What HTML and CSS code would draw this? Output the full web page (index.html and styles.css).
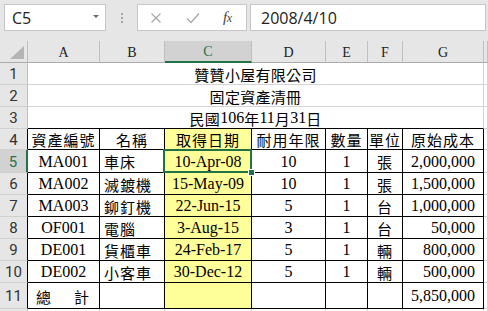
FILE: index.html
```
<!DOCTYPE html>
<html lang="zh-Hant">
<head>
<meta charset="utf-8">
<title>固定資產清冊</title>
<link rel="stylesheet" href="styles.css">
</head>
<body>
<div class="top">
  <div class="namebox"><span class="ref">C5</span><span class="dd"></span></div>
  <div class="dots"><i></i><i></i><i></i></div>
  <div class="fxbox">
    <svg class="ico" width="12" height="12" viewBox="0 0 12 12"><path d="M1.5 1.5L10.5 10.5M10.5 1.5L1.5 10.5" stroke="#a9a9a9" stroke-width="1.3" fill="none"/></svg>
    <svg class="ico" width="14" height="12" viewBox="0 0 14 12"><path d="M1 6.5L5 10.5L13 1.5" stroke="#a9a9a9" stroke-width="1.4" fill="none"/></svg>
    <span class="fx">f<span class="fxx">x</span></span>
  </div>
  <div class="input">2008/4/10</div>
</div>
<div class="sheet">
  <div class="corner"><i></i></div>
  <div class="ch">A</div><div class="ch">B</div><div class="ch sel">C</div><div class="ch">D</div><div class="ch">E</div><div class="ch">F</div><div class="ch">G</div><div class="ch"></div>

  <div class="rh">1</div><div class="c title zh">贊贊小屋有限公司</div><div class="c"></div>
  <div class="rh">2</div><div class="c title zh">固定資產清冊</div><div class="c"></div>
  <div class="rh">3</div><div class="c title bb zh">民國<span class="lat">106</span>年<span class="lat">11</span>月<span class="lat">31</span>日</div><div class="c"></div>

  <div class="rh blk">4</div>
  <div class="c t zh">資產編號</div><div class="c t zh">名稱</div><div class="c t y zh">取得日期</div><div class="c t zh">耐用年限</div><div class="c t zh">數量</div><div class="c t zh">單位</div><div class="c t zh">原始成本</div><div class="c"></div>

  <div class="rh act">5</div>
  <div class="c t">MA001</div><div class="c t zh l">車床</div><div class="c t y active">10-Apr-08<span class="sel-box"></span><span class="handle"></span></div><div class="c t">10</div><div class="c t">1</div><div class="c t zh">張</div><div class="c t r">2,000,000</div><div class="c"></div>

  <div class="rh blk">6</div>
  <div class="c t">MA002</div><div class="c t zh l">滅鍍機</div><div class="c t y">15-May-09</div><div class="c t">10</div><div class="c t">1</div><div class="c t zh">張</div><div class="c t r">1,500,000</div><div class="c"></div>

  <div class="rh blk">7</div>
  <div class="c t">MA003</div><div class="c t zh l">鉚釘機</div><div class="c t y">22-Jun-15</div><div class="c t">5</div><div class="c t">1</div><div class="c t zh">台</div><div class="c t r">1,000,000</div><div class="c"></div>

  <div class="rh blk">8</div>
  <div class="c t">OF001</div><div class="c t zh l">電腦</div><div class="c t y">3-Aug-15</div><div class="c t">3</div><div class="c t">1</div><div class="c t zh">台</div><div class="c t r">50,000</div><div class="c"></div>

  <div class="rh blk">9</div>
  <div class="c t">DE001</div><div class="c t zh l">貨櫃車</div><div class="c t y">24-Feb-17</div><div class="c t">5</div><div class="c t">1</div><div class="c t zh">輛</div><div class="c t r">800,000</div><div class="c"></div>

  <div class="rh blk">10</div>
  <div class="c t">DE002</div><div class="c t zh l">小客車</div><div class="c t y">30-Dec-12</div><div class="c t">5</div><div class="c t">1</div><div class="c t zh">輛</div><div class="c t r">500,000</div><div class="c"></div>

  <div class="rh blk">11</div>
  <div class="c t zh total">總　計</div><div class="c t"></div><div class="c t y"></div><div class="c t"></div><div class="c t"></div><div class="c t"></div><div class="c t r">5,850,000</div><div class="c"></div>

  <div class="rh"></div>
  <div class="c"></div><div class="c"></div><div class="c"></div><div class="c"></div><div class="c"></div><div class="c"></div><div class="c"></div><div class="c"></div>
</div>
</body>
</html>
```
FILE: styles.css
```
* { box-sizing: border-box; }
html, body { margin: 0; padding: 0; }
body {
  width: 488px;
  height: 311px;
  overflow: hidden;
  background: #fff;
  font-family: "Liberation Serif", "Noto Sans CJK TC", serif;
}

.top {
  height: 41px;
  background: #e6e6e6;
  display: flex;
  align-items: flex-start;
  padding: 4px 2px 0 4px;
}
.namebox {
  width: 102px;
  height: 27px;
  background: #fff;
  border: 1px solid #c6c6c6;
  display: flex;
  align-items: center;
  justify-content: space-between;
  padding: 0 6px 0 7px;
}
.ref {
  font: 16px "Open Sans", sans-serif;
  color: #222;
}
.dd {
  width: 0; height: 0;
  border-left: 3.5px solid transparent;
  border-right: 3.5px solid transparent;
  border-top: 3.5px solid #666;
  margin-top: -2px;
}
.dots {
  width: 31px;
  height: 27px;
  display: flex;
  flex-direction: column;
  align-items: center;
  justify-content: center;
  gap: 2px;
}
.dots i {
  display: block;
  width: 2px;
  height: 2px;
  background: #a6a6a6;
}
.fxbox {
  width: 110px;
  height: 27px;
  background: #fff;
  border: 1px solid #c6c6c6;
  display: flex;
  align-items: center;
  padding-left: 12px;
  gap: 0;
}
.fxbox .ico:first-child { margin-right: 24px; }
.fxbox .ico:nth-child(2) { margin-right: 23px; }
.fx {
  font: italic 15px "Liberation Serif", serif;
  color: #444;
  letter-spacing: -0.5px;
}
.fxx { font-size: 12px; }
.input {
  flex: 1;
  margin-left: 3px;
  height: 27px;
  background: #fff;
  border: 1px solid #c6c6c6;
  font: 16px "Open Sans", sans-serif;
  color: #222;
  display: flex;
  align-items: center;
  padding-left: 10px;
}

.sheet {
  display: grid;
  grid-template-columns: 28px 72px 65px 87px 74px 42px 35px 81px 1fr;
  grid-template-rows: 22px 22px 22px 22px 21px 23px 22px 22px 22px 22px 22px 26px 22px;
}

.corner {
  background: #e6e6e6;
  border-right: 1px solid #bfbfbf;
  border-bottom: 1px solid #ababab;
  display: flex;
  align-items: flex-end;
  justify-content: flex-end;
  padding: 0 3px 3px 0;
}
.corner i {
  display: block;
  width: 14px;
  height: 13px;
  background: #b4b4b4;
  clip-path: polygon(100% 0, 100% 100%, 0 100%);
}
.ch {
  background: #e6e6e6;
  border-right: 1px solid #bfbfbf;
  border-bottom: 1px solid #ababab;
  display: flex;
  align-items: center;
  justify-content: center;
  font: 14px "Liberation Serif", serif;
  color: #222;
  padding-top: 2px;
}
.ch.sel {
  background: #d2d2d2;
  color: #217346;
  border-bottom: 2px solid #217346;
}
.rh {
  background: #e6e6e6;
  border-right: 1px solid #bfbfbf;
  border-bottom: 1px solid #d0d0d0;
  display: flex;
  align-items: center;
  justify-content: center;
  font: 15px Roboto, sans-serif;
  color: #333;
  padding-top: 1px;
}
.rh.blk { border-right-color: #000; }
.rh.act {
  background: #d2d2d2;
  color: #217346;
  border-right: 2px solid #217346;
}

.c {
  border-right: 1px solid #d4d4d4;
  border-bottom: 1px solid #d4d4d4;
  display: flex;
  align-items: center;
  justify-content: center;
  font-size: 16px;
  color: #000;
  white-space: nowrap;
  overflow: hidden;
  padding-top: 1px;
}
.c.t {
  border-right-color: #000;
  border-bottom-color: #000;
}
.c.y { background: #ffff99; }
.c.l { justify-content: flex-start; padding-left: 4px; }
.c.r { justify-content: flex-end; padding-right: 8px; }
.zh {
  font-size: 15px;
  letter-spacing: 1px;
}
.lat {
  font-family: "Liberation Serif", serif;
  font-size: 16px;
  letter-spacing: 0;
}
.title {
  grid-column: span 7;
  letter-spacing: 0.3px;
}
.title.bb { border-bottom-color: #000; }
.total {
  justify-content: flex-start;
  padding-left: 8px;
  letter-spacing: 4px;
}

.active {
  position: relative;
  overflow: visible;
}
.sel-box {
  position: absolute;
  left: -2px;
  top: -1px;
  right: -1px;
  bottom: -1px;
  border: 2px solid #217346;
  pointer-events: none;
}
.handle {
  position: absolute;
  right: -4px;
  bottom: -4px;
  width: 7px;
  height: 7px;
  background: #217346;
  border: 1px solid #fff;
}
```
